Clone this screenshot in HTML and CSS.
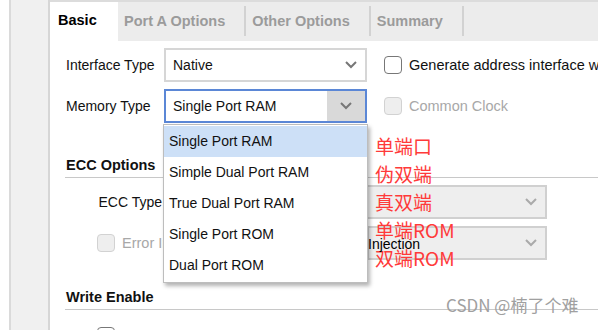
FILE: index.html
```html
<!DOCTYPE html>
<html lang="zh">
<head>
  <meta charset="UTF-8">
  <title>Block Memory Generator</title>
  <link rel="stylesheet" href="styles.css">
</head>
<body>
  <div class="app">
    <div class="gutter"></div>
    <div class="rail"></div>
    <div class="panel">
      <div class="tabs">
        <div class="tab active">Basic</div>
        <div class="tab">Port A Options</div>
        <div class="tab">Other Options</div>
        <div class="tab">Summary</div>
      </div>

      <div class="content">
        <div class="row">
          <span class="label">Interface Type</span>
          <div class="select">
            <span>Native</span>
            <svg class="chev" width="12" height="8" viewBox="0 0 12 8"><polyline points="1,1 6,6 11,1" fill="none" stroke="#777" stroke-width="2"/></svg>
          </div>
          <label class="check">
            <span class="box"></span>
            Generate address interface w
          </label>
        </div>

        <div class="row">
          <span class="label">Memory Type</span>
          <div class="select open">
            <span>Single Port RAM</span>
            <span class="btn">
              <svg class="chev" width="12" height="8" viewBox="0 0 12 8"><polyline points="1,1 6,6 11,1" fill="none" stroke="#777" stroke-width="2"/></svg>
            </span>
          </div>
          <label class="check disabled">
            <span class="box"></span>
            Common Clock
          </label>
        </div>

        <div class="section">ECC Options</div>

        <div class="row small">
          <span class="label right">ECC Type</span>
          <div class="select grey wide">
            <span></span>
            <svg class="chev" width="12" height="8" viewBox="0 0 12 8"><polyline points="1,1 6,6 11,1" fill="none" stroke="#aaa" stroke-width="2"/></svg>
          </div>
        </div>

        <div class="row indent">
          <label class="check disabled">
            <span class="box"></span>
            Error In
          </label>
          <div class="select grey short">
            <span></span>
            <svg class="chev" width="12" height="8" viewBox="0 0 12 8"><polyline points="1,1 6,6 11,1" fill="none" stroke="#aaa" stroke-width="2"/></svg>
          </div>
        </div>

        <div class="section tall">Write Enable</div>

        <div class="row indent last">
          <label class="check">
            <span class="box"></span>
            Byte Write Enable
          </label>
        </div>
      </div>

      <ul class="dropdown">
        <li class="selected">Single Port RAM</li>
        <li>Simple Dual Port RAM</li>
        <li>True Dual Port RAM</li>
        <li>Single Port ROM</li>
        <li>Dual Port ROM</li>
      </ul>

      <div class="notes">
        <span>单端口</span>
        <span>伪双端</span>
        <span>真双端</span>
        <span>单端ROM</span>
        <span>双端ROM</span>
      </div>
      <span class="stray">Injection</span>
    </div>
  </div>
  <div class="watermark">CSDN @楠了个难</div>
</body>
</html>
```

FILE: styles.css
```css
/* Basic tab of the memory generator */
body {
  margin: 0;
  font-family: "Liberation Sans", Arial, sans-serif;
  font-size: 14px;
  color: #111;
  background: #fff;
  overflow: hidden;
}

.app {
  display: flex;
  height: 330px;
}

.gutter {
  width: 9px;
  border-right: 2px solid #dadada;
}

.rail {
  width: 37px;
  background: #f0f0f0;
  border-right: 2px solid #d6d6d6;
}

.panel {
  flex: 1;
  position: relative;
  border-top: 2px solid #dcdcdc;
  overflow: hidden;
}

/* tabs */
.tabs {
  display: flex;
  height: 39px;
  background: #ececec;
}

.tab {
  margin-top: 4px;
  height: 30px;
  padding: 0 19px 0 6px;
  border-right: 2px solid #d2d2d2;
  display: flex;
  align-items: center;
  font-weight: bold;
  font-size: 14.5px;
  color: #9b9b9b;
  white-space: nowrap;
}

.tab.active {
  margin-top: 0;
  height: auto;
  width: 68px;
  box-sizing: border-box;
  padding: 0 0 4px 8px;
  border-right: none;
  background: #fff;
  color: #000;
}

/* form rows */
.content {
  padding: 7px 0 0 16px;
}

.row {
  display: flex;
  align-items: center;
  height: 34px;
  margin-bottom: 7px;
  white-space: nowrap;
}

.row.small {
  height: 33px;
  margin-top: 7px;
  margin-bottom: 8px;
}

.row.indent {
  padding-left: 31px;
}

.row.last {
  margin-top: 2px;
}

.label {
  width: 98px;
  flex-shrink: 0;
}

.label.right {
  text-align: right;
  padding-right: 2px;
  box-sizing: border-box;
}

.select {
  width: 203px;
  height: 34px;
  box-sizing: border-box;
  border: 2px solid #d6d6d6;
  background: #fff;
  display: flex;
  align-items: center;
  padding-left: 7px;
  flex-shrink: 0;
}

.select span:first-child {
  flex: 1;
}

.chev {
  margin-right: 8px;
}

.select.open {
  border-color: #5b87d6;
}

.select.open .btn {
  width: 38px;
  align-self: stretch;
  background: #d9d9d9;
  display: flex;
  align-items: center;
  justify-content: center;
}

.select.open .btn .chev {
  margin-right: 0;
}

.select.grey {
  background: #eeeeee;
  border-color: #d0d0d0;
  color: #999;
}

.select.wide {
  width: 383px;
}

.select.short {
  width: 180px;
  margin-left: auto;
  margin-right: 51px;
}

.check {
  display: flex;
  align-items: center;
  gap: 7px;
  margin-left: 17px;
  font-size: 14.5px;
}

.row.indent .check {
  margin-left: 0;
}

.box {
  width: 18px;
  height: 18px;
  box-sizing: border-box;
  border: 1.5px solid #777;
  border-radius: 4px;
  background: #fff;
}

.check.disabled {
  color: #a8a8a8;
}

.check.disabled .box {
  border-color: #d2d2d2;
  background: #eeeeee;
}

/* section headers */
.section {
  padding: 27px 0 4px 1px;
  margin-left: -1px;
  font-weight: bold;
  font-size: 14.5px;
  line-height: 16px;
  border-bottom: 1px solid #c8c8c8;
}

.section.tall {
  padding-top: 22px;
  margin-bottom: 9px;
}

/* open list of Memory Type */
.dropdown {
  position: absolute;
  left: 113px;
  top: 122px;
  width: 205px;
  margin: 0;
  padding: 1px 0;
  list-style: none;
  background: #fff;
  border: 1px solid #bdbdbd;
  box-sizing: border-box;
  box-shadow: 2px 3px 4px rgba(0, 0, 0, 0.3);
}

.dropdown li {
  height: 31px;
  line-height: 31px;
  padding-left: 5px;
}

.dropdown li.selected {
  background: #cde0f7;
}

/* hand-written notes over the shot */
.notes {
  position: absolute;
  left: 325px;
  top: 130px;
  display: flex;
  flex-direction: column;
  font-family: "Noto Sans CJK SC", sans-serif;
  font-size: 19px;
  line-height: 28px;
  color: #ff3a3a;
}

.stray {
  position: absolute;
  left: 318px;
  top: 234px;
  font-size: 14px;
  color: #000;
}

.watermark {
  position: absolute;
  left: 446px;
  top: 292px;
  font-family: "Noto Sans CJK SC", sans-serif;
  font-size: 17px;
  color: #a0a0a0;
}
```
